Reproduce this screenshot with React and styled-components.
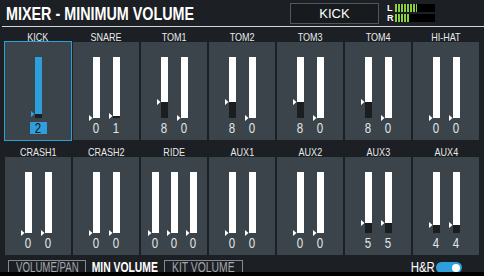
import React from 'react'
import styled, {createGlobalStyle} from 'styled-components'

const BG = '#1c1f23'
const PANEL = '#3a444a'
const BLUE = '#2f9fdc'
const SANS = '"Liberation Sans", Arial, sans-serif'

const channels = [
    {name: 'KICK', values: [2], selected: true},
    {name: 'SNARE', values: [0, 1]},
    {name: 'TOM1', values: [8, 0]},
    {name: 'TOM2', values: [8, 0]},
    {name: 'TOM3', values: [8, 0]},
    {name: 'TOM4', values: [8, 0]},
    {name: 'HI-HAT', values: [0, 0]},
    {name: 'CRASH1', values: [0, 0]},
    {name: 'CRASH2', values: [0, 0]},
    {name: 'RIDE', values: [0, 0, 0]},
    {name: 'AUX1', values: [0, 0]},
    {name: 'AUX2', values: [0, 0]},
    {name: 'AUX3', values: [5, 5]},
    {name: 'AUX4', values: [4, 4]}
]

const Fader = ({value, selected}) => (
    <FaderCol>
        <Bar $selected={selected}>
            <Level $height={value * 2} />
            <Pointer $selected={selected} $top={61 - value * 2 - 3.5} />
        </Bar>
        <Value $selected={selected}><Narrow>{value}</Narrow></Value>
    </FaderCol>
)

const App = () => {
    return <Screen>
        <GlobalStyle />
        <Header>
            <Title><Narrow $origin="left">MIXER - MINIMUM VOLUME</Narrow></Title>
            <InstBox>KICK</InstBox>
            <Meter>
                <MeterRow><MeterLabel>L</MeterLabel><MeterBar><MeterFill $w={22} /></MeterBar></MeterRow>
                <MeterRow><MeterLabel>R</MeterLabel><MeterBar><MeterFill $w={15} /></MeterBar></MeterRow>
            </Meter>
        </Header>
        <Rule />
        <Grid>
            {channels.map(ch => (
                <Channel key={ch.name}>
                    <Label><Narrow>{ch.name}</Narrow></Label>
                    <Panel $selected={ch.selected} $gap={ch.values.length > 2 ? 12 : 13}>
                        {ch.values.map((v, i) => <Fader key={i} value={v} selected={ch.selected} />)}
                    </Panel>
                </Channel>
            ))}
        </Grid>
        <BottomBar>
            <Tab $w={78}><Narrow $scale={0.69}>VOLUME/PAN</Narrow></Tab>
            <Tab $w={66} $active><Narrow $scale={0.74}>MIN VOLUME</Narrow></Tab>
            <Tab $w={79}><Narrow $scale={0.74}>KIT VOLUME</Narrow></Tab>
            <HR><Narrow>H&amp;R</Narrow></HR>
            <Toggle><Knob /></Toggle>
        </BottomBar>
        <Footer />
    </Screen>
}

const GlobalStyle = createGlobalStyle`
    body {
        margin: 0;
        background: ${BG};
    }
`

const Screen = styled.div`
    width: 484px;
    height: 276px;
    overflow: hidden;
    background: ${BG};
    font-family: ${SANS};
    color: #fff;
    display: flex;
    flex-direction: column;
`

// the hardware uses a condensed face, so squeeze Arial-metric text horizontally
const Narrow = styled.span`
    display: inline-block;
    flex: none;
    white-space: nowrap;
    transform: scaleX(${p => p.$scale || 0.82});
    transform-origin: ${p => p.$origin || 'center'};
`

const Header = styled.div`
    height: 26px;
    display: flex;
    align-items: flex-start;
    padding-right: 49px;
`

const Title = styled.div`
    flex: 1;
    padding: 1px 0 0 6px;
    font-size: 17.5px;
    font-weight: 700;
    line-height: 26px;
    white-space: nowrap;
`

const InstBox = styled.div`
    margin-top: 3px;
    width: 89px;
    height: 21px;
    box-sizing: border-box;
    border: 1px solid #4d575d;
    background: #181b1e;
    font-size: 13px;
    line-height: 19px;
    text-align: center;
    margin-right: 8px;
`

const Meter = styled.div`
    padding-top: 4px;
    display: flex;
    flex-direction: column;
    gap: 2px;
`

const MeterRow = styled.div`
    display: flex;
    height: 8px;
`

const MeterLabel = styled.div`
    width: 8px;
    font-size: 9px;
    font-weight: 700;
    line-height: 8px;
`

const MeterBar = styled.div`
    width: 40px;
    background: #000;
`

const MeterFill = styled.div.attrs(p => ({style: {width: p.$w}}))`
    height: 100%;
    background: repeating-linear-gradient(to right, #86d13c 0 2px, transparent 2px 3px);
`

const Rule = styled.div`
    height: 1px;
    background: #d4d8da;
    margin-left: 2px;
`

const Grid = styled.div`
    display: grid;
    grid-template-columns: repeat(7, 66px);
    column-gap: 2px;
    row-gap: 2px;
    padding: 0 5px;
`

const Channel = styled.div`
    display: flex;
    flex-direction: column;
`

const Label = styled.div`
    height: 15px;
    box-sizing: border-box;
    padding-top: 6px;
    font-size: 11px;
    line-height: 9px;
    display: flex;
    justify-content: center;
    color: #e8eaeb;
`

const Panel = styled.div`
    height: 98px;
    box-sizing: border-box;
    padding-top: 15px;
    background: ${PANEL};
    display: flex;
    justify-content: center;
    gap: ${p => p.$gap}px;
    outline: ${p => p.$selected ? `1px solid ${BLUE}` : 'none'};
`

const FaderCol = styled.div`
    display: flex;
    flex-direction: column;
    align-items: center;
    width: 7px;
`

const Bar = styled.div`
    position: relative;
    width: 7px;
    height: 61px;
    background: ${p => p.$selected ? BLUE : '#fff'};
    display: flex;
    flex-direction: column;
    justify-content: flex-end;
`

const Level = styled.div.attrs(p => ({style: {height: p.$height}}))`
    background: #1b1e21;
`

const Pointer = styled.div.attrs(p => ({style: {top: p.$top}}))`
    position: absolute;
    left: -4px;
    width: 4px;
    height: 7px;
    background: ${p => p.$selected ? BLUE : '#fff'};
    clip-path: polygon(0 0, 100% 50%, 0 100%);
`

const Value = styled.div`
    flex: none;
    display: flex;
    justify-content: center;
    font-size: 14px;
    color: ${p => p.$selected ? '#111' : '#e4e6e7'};
    background: ${p => p.$selected ? BLUE : 'transparent'};
    width: ${p => p.$selected ? '17px' : 'auto'};
    margin-top: ${p => p.$selected ? '4px' : '3px'};
    height: ${p => p.$selected ? '12px' : '14px'};
    line-height: ${p => p.$selected ? '12px' : '14px'};
`

const BottomBar = styled.div`
    height: 17px;
    display: flex;
    align-items: flex-start;
    gap: 6px;
    padding: 5px 22px 0 8px;
    box-sizing: border-box;
    margin-top: auto;
`

const Tab = styled.div`
    width: ${p => p.$w}px;
    height: 12px;
    box-sizing: border-box;
    border: 1px solid ${p => p.$active ? 'transparent' : '#858b90'};
    border-bottom: none;
    font-size: 14px;
    font-weight: ${p => p.$active ? 700 : 400};
    line-height: 12px;
    display: flex;
    justify-content: center;
    color: ${p => p.$active ? '#fff' : '#a3a9ad'};
`

const HR = styled.div`
    margin-left: auto;
    width: 26px;
    display: flex;
    justify-content: center;
    font-size: 14px;
    line-height: 12px;
    padding-top: 1px;
`

const Toggle = styled.div`
    margin: 2px 0 0 -6px;
    width: 26px;
    height: 11px;
    border-radius: 6px;
    background: ${BLUE};
    display: flex;
    align-items: center;
    justify-content: flex-end;
    padding-right: 2px;
    box-sizing: border-box;
`

const Knob = styled.div`
    width: 8px;
    height: 8px;
    border-radius: 50%;
    background: #fff;
`

const Footer = styled.div`
    height: 4px;
    background: #000;
`

export default App
